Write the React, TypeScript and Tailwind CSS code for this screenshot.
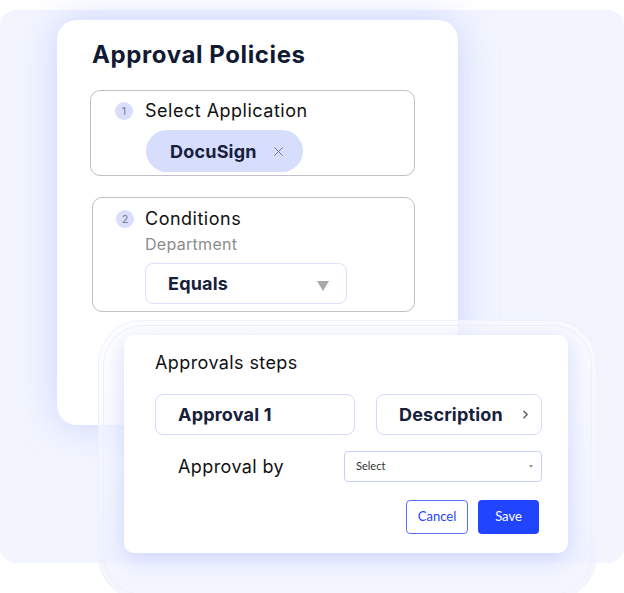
import { X, ChevronRight } from "lucide-react";

const font = { fontFamily: "Inter, 'Noto Sans', sans-serif" };

function StepBadge({ n }: { n: number }) {
    return (
        <span className="flex h-[18px] w-[18px] shrink-0 items-center justify-center rounded-full bg-[#d8defb] text-[11px] text-[#7a7f95]">
            {n}
        </span>
    );
}

export default function App() {
    return (
        <div className="h-[593px] w-[624px] overflow-hidden bg-white pt-[10px]" style={font}>
            {/* background panel */}
            <div className="h-[553px] rounded-[16px] bg-[#f2f5ff] pl-[57px] pt-[10px]">
                {/* main card */}
                <div className="relative z-10 h-[405px] w-[401px] rounded-[20px] bg-white pl-[33px] pt-[20px] shadow-[0_0_36px_rgba(175,188,255,0.6)]">
                    <h1 className="ml-[2px] text-[24px] font-bold leading-[30px] tracking-[0.6px] text-[#121a33]">Approval Policies</h1>

                    <div className="mt-[20px] h-[86px] w-[325px] rounded-[10px] border border-[#bfbfc4] pl-[24px] pt-[9px]">
                        <div className="flex items-center gap-[12px]">
                            <StepBadge n={1} />
                            <span className="text-[18px] leading-[22px] tracking-[0.5px] text-[#111]">Select Application</span>
                        </div>
                        <div className="ml-[31px] mt-[8px] flex h-[42px] w-[157px] items-center rounded-full bg-[#d6ddfd] pl-[24px]">
                            <span className="text-[18px] font-bold tracking-[0.2px] text-[#16203a]">DocuSign</span>
                            <X className="ml-[14px] h-[15px] w-[15px] text-[#6c7089]" strokeWidth={1.5} />
                        </div>
                    </div>

                    <div className="ml-[2px] mt-[21px] h-[115px] w-[323px] rounded-[10px] border border-[#bfbfc4] pl-[23px] pt-[10px]">
                        <div className="flex items-center gap-[11px]">
                            <StepBadge n={2} />
                            <span className="text-[18px] leading-[22px] tracking-[0.5px] text-[#111]">Conditions</span>
                        </div>
                        <div className="ml-[29px] mt-[4px] text-[16px] leading-[20px] tracking-[0.3px] text-[#8c8c8c]">Department</div>
                        <div className="ml-[29px] mt-[9px] flex h-[41px] w-[202px] items-center justify-between rounded-[8px] border border-[#dce1fc] pl-[22px] pr-[17px]">
                            <span className="text-[18px] font-bold tracking-[0.2px] text-[#16203a]">Equals</span>
                            <span className="mt-[4px] h-0 w-0 border-x-[6px] border-t-[10px] border-x-transparent border-t-[#a9a9ad]" />
                        </div>
                    </div>
                </div>

                {/* approvals steps card */}
                <div className="relative z-20 -mt-[105px] ml-[41px] h-[280px] w-[499px] rounded-[44px] border border-[#f0f2fe] bg-gradient-to-b from-white/60 to-[#eef1ff]/70 p-[4px]">
                    <div className="h-full w-full rounded-[40px] border border-[#eef1fd] pl-[20px] pt-[9px]">
                        <div className="h-[218px] w-[444px] rounded-[10px] bg-white pl-[31px] pt-[16px] shadow-[0_6px_22px_rgba(170,185,255,0.5)]">
                            <div className="text-[18px] leading-[24px] tracking-[0.4px] text-[#111]">Approvals steps</div>
                            <div className="mt-[19px] flex gap-[21px]">
                                <div className="flex h-[41px] w-[200px] items-center rounded-[8px] border border-[#d5dbfd] pl-[22px]">
                                    <span className="text-[18px] font-bold tracking-[0.2px] text-[#16203a]">Approval 1</span>
                                </div>
                                <div className="flex h-[41px] w-[166px] items-center justify-between rounded-[8px] border border-[#d5dbfd] pl-[22px] pr-[9px]">
                                    <span className="text-[18px] font-bold tracking-[0.2px] text-[#16203a]">Description</span>
                                    <ChevronRight className="h-[13px] w-[13px] text-[#666]" strokeWidth={3} />
                                </div>
                            </div>
                            <div className="mt-[16px] flex items-center">
                                <span className="ml-[23px] w-[166px] text-[18px] tracking-[0.4px] text-[#111]">Approval by</span>
                                <div className="flex h-[31px] w-[198px] items-center justify-between rounded-[4px] border border-[#c9d0f7] pl-[11px] pr-[8px]">
                                    <span className="text-[11px] text-[#333]" style={{ fontFamily: "Lato, sans-serif" }}>Select</span>
                                    <span className="h-0 w-0 border-x-[2.5px] border-t-[3px] border-x-transparent border-t-[#999]" />
                                </div>
                            </div>
                            <div className="mt-[18px] flex justify-end gap-[10px] pr-[29px]" style={{ fontFamily: "Lato, sans-serif" }}>
                                <button className="flex h-[34px] w-[62px] items-center justify-center rounded-[4px] border-[1.5px] border-[#5b73f3] text-[13px] text-[#2446f5]">
                                    Cancel
                                </button>
                                <button className="flex h-[34px] w-[61px] items-center justify-center rounded-[4px] bg-[#2145ff] text-[13px] text-white">
                                    Save
                                </button>
                            </div>
                        </div>
                    </div>
                </div>
            </div>
        </div>
    );
}
